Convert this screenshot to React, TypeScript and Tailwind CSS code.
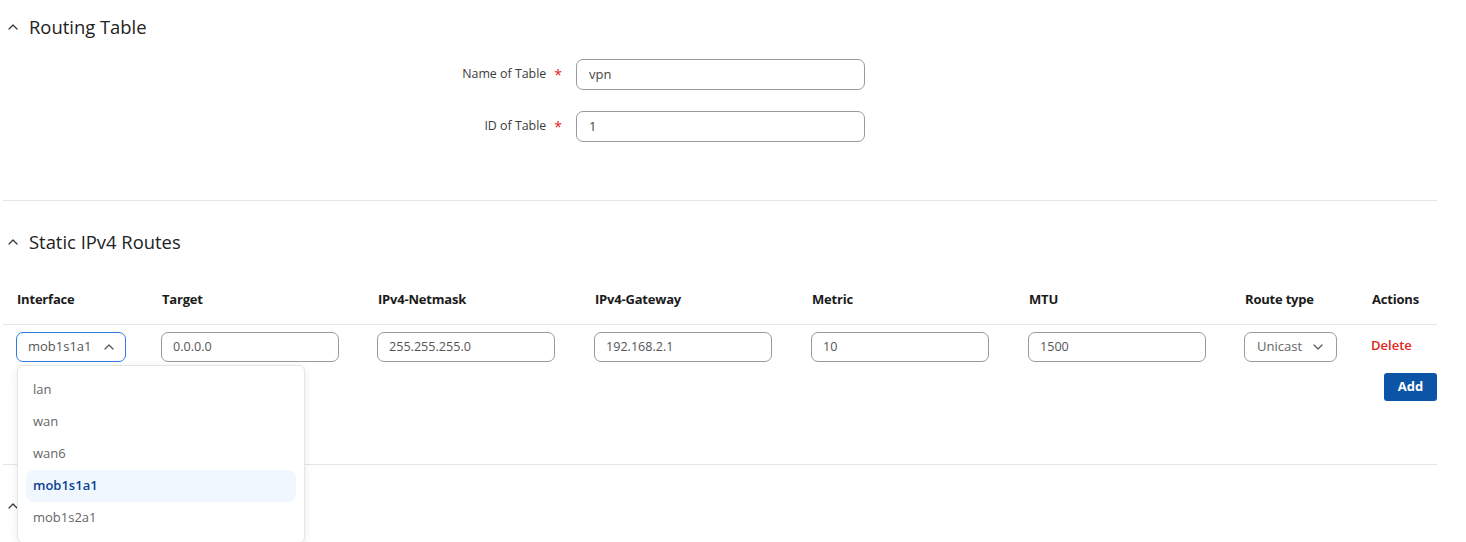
import React from "react";

const font = { fontFamily: '"Open Sans", "Liberation Sans", sans-serif' };

function Chevron({ down = false, className = "" }: { down?: boolean; className?: string }) {
    return (
        <svg width="10" height="6" viewBox="0 0 10 6" className={className} fill="none">
            <polyline
                points={down ? "1,1 5,5 9,1" : "1,5 5,1 9,5"}
                stroke="currentColor"
                strokeWidth="1.2"
                strokeLinecap="round"
                strokeLinejoin="round"
            />
        </svg>
    );
}

function SectionTitle({ title }: { title?: string }) {
    return (
        <div className="flex h-[26px] items-center gap-[11px] pl-[5px]">
            <Chevron className="text-[#333]" />
            {title && <h2 className="text-[18.4px] leading-[26px] text-[#222]">{title}</h2>}
        </div>
    );
}

function FormRow({ label, value }: { label: string; value: string }) {
    return (
        <div className="flex items-center">
            <div className="flex w-[573px] items-center justify-end pr-[14px]">
                <span className="text-[12.4px] text-[#3c3c3c]">{label}</span>
                <span className="ml-[8px] text-[14px] text-[#e02020]">*</span>
            </div>
            <div className="flex h-[31px] w-[289px] items-center rounded-[7px] border border-[#9a9aa0] px-[12px] text-[13px] text-[#444]">
                {value}
            </div>
        </div>
    );
}

function TextCell({ value }: { value: string }) {
    return (
        <div className="flex h-[30px] w-[178px] items-center rounded-[7px] border border-[#9a9aa0] px-[11px] text-[12.6px] text-[#555]">
            {value}
        </div>
    );
}

const headers = ["Interface", "Target", "IPv4-Netmask", "IPv4-Gateway", "Metric", "MTU", "Route type", "Actions"];
const options = ["lan", "wan", "wan6", "mob1s1a1", "mob1s2a1"];

export default function App() {
    return (
        <div style={font} className="relative h-[542px] w-[1466px] overflow-hidden bg-white">
            <div className="ml-[3px] w-[1434px]">
                {/* Routing Table */}
                <div className="pt-[14px]">
                    <SectionTitle title="Routing Table" />
                    <div className="mt-[19px] flex flex-col gap-[21px]">
                        <FormRow label="Name of Table" value="vpn" />
                        <FormRow label="ID of Table" value="1" />
                    </div>
                </div>
                <div className="mt-[58px] border-t border-[#e3e5e8]" />

                {/* Static IPv4 Routes */}
                <div className="pt-[28px]">
                    <SectionTitle title="Static IPv4 Routes" />
                    <div className="mt-[24px] pl-[13px]">
                        <div className="grid h-[45px] grid-cols-[145px_216px_217px_217px_217px_216px_127px_66px] items-center pb-[3px]">
                            {headers.map((h) => (
                                <span key={h} className="pl-[1px] text-[13px] font-bold tracking-[-0.2px] text-[#1b1b1b]">
                                    {h}
                                </span>
                            ))}
                        </div>
                    </div>
                    <div className="border-t border-[#e1e6ee]" />
                    <div className="pl-[13px]">
                        <div className="grid grid-cols-[145px_216px_217px_217px_217px_216px_127px_66px] items-center pt-[7px]">
                            <div className="relative">
                                <div className="flex h-[30px] w-[110px] items-center gap-[12px] rounded-[7px] border border-[#2f7de1] pl-[11px] text-[13px] text-[#555]">
                                    mob1s1a1
                                    <Chevron className="text-[#555]" />
                                </div>
                                <div className="absolute left-[1px] top-[33px] z-10 w-[288px] rounded-[6px] border border-[#e3e5e8] bg-white px-[8px] pt-[8px] pb-[8px] shadow-[0_2px_10px_rgba(0,0,0,0.08)]">
                                    {options.map((o) => (
                                        <div
                                            key={o}
                                            className={
                                                o === "mob1s1a1"
                                                    ? "flex h-[32px] items-center rounded-[8px] bg-[#f0f7fe] pl-[7px] text-[13px] font-semibold text-[#0b3f94]"
                                                    : "flex h-[32px] items-center pl-[7px] text-[13px] text-[#666]"
                                            }
                                        >
                                            {o}
                                        </div>
                                    ))}
                                </div>
                            </div>
                            <TextCell value="0.0.0.0" />
                            <TextCell value="255.255.255.0" />
                            <TextCell value="192.168.2.1" />
                            <TextCell value="10" />
                            <TextCell value="1500" />
                            <div className="flex h-[30px] w-[93px] items-center gap-[11px] rounded-[7px] border border-[#9a9aa0] pl-[12px] text-[13px] text-[#666]">
                                Unicast
                                <Chevron down className="text-[#555]" />
                            </div>
                            <span className="pb-[3px] text-[13px] font-semibold text-[#e2231a]">Delete</span>
                        </div>
                        <div className="mt-[11px] flex justify-end">
                            <button
                                type="button"
                                className="flex h-[28px] w-[53px] items-center justify-center rounded-[3px] bg-[#0b54a6] text-[13px] font-bold text-white"
                            >
                                Add
                            </button>
                        </div>
                    </div>
                </div>
                <div className="mt-[63px] border-t border-[#e3e5e8]" />

                {/* next section, its title lies under the open menu */}
                <div className="pt-[28px]">
                    <SectionTitle />
                </div>
            </div>
        </div>
    );
}
